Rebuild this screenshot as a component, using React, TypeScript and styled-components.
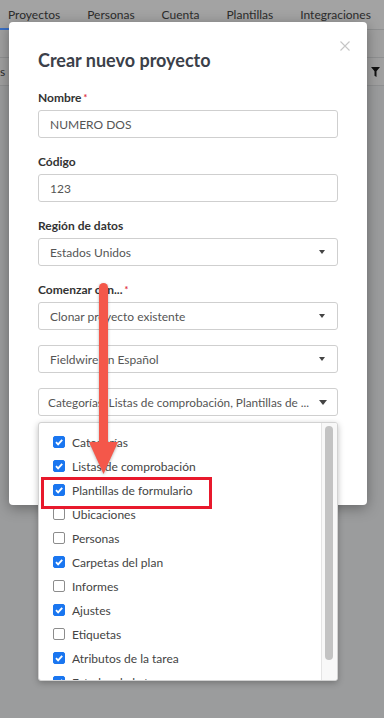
import React from "react";
import styled, { createGlobalStyle } from "styled-components";

const Global = createGlobalStyle`
  html, body { margin: 0; padding: 0; }
  body {
    background: #9b9c9d;
    font-family: Lato, "Noto Sans", sans-serif;
    overflow: hidden;
  }
  * { box-sizing: border-box; }
`;

const Page = styled.div`
  position: relative;
  width: 384px;
  height: 718px;
  overflow: hidden;
  background: #9b9c9d;
`;

const TopNav = styled.nav`
  display: flex;
  gap: 11px;
  height: 30px;
  background: #a3a3a3;
  border-bottom: 1px solid #8f9091;
`;

const Tab = styled.div<{ $active?: boolean }>`
  display: flex;
  align-items: center;
  padding: 0 8px;
  font-size: 12px;
  color: #2c2c2c;
  white-space: nowrap;
  border-bottom: 2px solid ${(p) => (p.$active ? "#3a6fc4" : "transparent")};
  margin-bottom: -1px;
`;

const BgRow = styled.div`
  display: flex;
  align-items: center;
  justify-content: space-between;
  height: 28px;
  background: #a0a0a0;
  border-bottom: 1px solid #8f9091;
  font-size: 12px;
  color: #2c2c2c;
  padding-right: 4px;
`;

const Modal = styled.div`
  position: absolute;
  left: 9px;
  top: 22px;
  width: 358px;
  height: 483px;
  background: #fff;
  border-radius: 4px;
  box-shadow: 0 3px 14px rgba(0, 0, 0, 0.35);
  padding: 26px 29px 0;
`;

const Close = styled.div`
  position: absolute;
  right: 17px;
  top: 19px;
  width: 10px;
  height: 10px;
  display: flex;
`;

const Title = styled.h2`
  margin: 0 0 18px;
  font-size: 18px;
  line-height: 24px;
  font-weight: 700;
  color: #3b4049;
`;

const Field = styled.div`
  display: flex;
  flex-direction: column;
  margin-bottom: 16px;
`;

const Label = styled.div`
  font-size: 12px;
  line-height: 16px;
  font-weight: 700;
  color: #333;
  margin-bottom: 4px;
`;

const Req = styled.span`
  color: #e0303a;
  font-size: 9px;
  vertical-align: top;
  margin-left: 2px;
`;

const Input = styled.div`
  height: 28px;
  border: 1px solid #cfcfcf;
  border-radius: 3px;
  padding: 0 11px;
  display: flex;
  align-items: center;
  font-size: 12px;
  color: #555;
`;

const SelectBox = styled.div<{ $tight?: boolean }>`
  height: 28px;
  border: 1px solid #cfcfcf;
  border-radius: 3px;
  padding: 0 ${(p) => (p.$tight ? "10px" : "12px")} 0 ${(p) => (p.$tight ? "9px" : "11px")};
  display: flex;
  align-items: center;
  justify-content: space-between;
  gap: ${(p) => (p.$tight ? "2px" : "10px")};
  font-size: ${(p) => (p.$tight ? "11.8px" : "12px")};
  color: #555;
`;

const SelectText = styled.span`
  flex: 1;
  min-width: 0;
  white-space: nowrap;
  overflow: hidden;
`;

const Stack = styled.div`
  display: flex;
  flex-direction: column;
  gap: 15px;
`;

const Caret = styled.span<{ $big?: boolean }>`
  width: 0;
  height: 0;
  border-left: ${(p) => (p.$big ? 4 : 3.5)}px solid transparent;
  border-right: ${(p) => (p.$big ? 4 : 3.5)}px solid transparent;
  border-top: ${(p) => (p.$big ? 5 : 4)}px solid #444;
  flex: none;
`;

const Dropdown = styled.div`
  position: absolute;
  left: 38px;
  top: 422px;
  width: 300px;
  height: 259px;
  background: #fff;
  border: 1px solid #d2d2d2;
  border-radius: 3px;
  box-shadow: 0 2px 6px rgba(0, 0, 0, 0.25);
  display: flex;
  overflow: hidden;
`;

const List = styled.div`
  flex: 1;
  padding-top: 7px;
  display: flex;
  flex-direction: column;
`;

const Item = styled.div`
  height: 24px;
  flex: none;
  display: flex;
  align-items: center;
  gap: 7px;
  padding-left: 14px;
  font-size: 12px;
  color: #444;
`;

const Check = styled.span<{ $on: boolean }>`
  width: 12px;
  height: 12px;
  flex: none;
  border-radius: 2px;
  background: ${(p) => (p.$on ? "#1a76f0" : "#fff")};
  border: 1px solid ${(p) => (p.$on ? "#1a76f0" : "#8c8c8c")};
  display: flex;
  align-items: center;
  justify-content: center;
`;

const Track = styled.div`
  width: 16px;
  flex: none;
  background: #f8f8f8;
  border-left: 1px solid #e4e4e4;
  padding: 3px 3px 0 3px;
`;

const Thumb = styled.div`
  width: 8px;
  height: 234px;
  border-radius: 4px;
  background: #c3c3c3;
`;

const Highlight = styled.div`
  position: absolute;
  left: 41px;
  top: 477px;
  width: 171px;
  height: 32px;
  border: 3px solid #e8192c;
`;

const ArrowSvg = styled.svg`
  position: absolute;
  left: 86px;
  top: 278px;
  overflow: visible;
  filter: drop-shadow(0 1px 1.5px rgba(0, 0, 0, 0.3));
`;

const items: [string, boolean][] = [
  ["Categorías", true],
  ["Listas de comprobación", true],
  ["Plantillas de formulario", true],
  ["Ubicaciones", false],
  ["Personas", false],
  ["Carpetas del plan", true],
  ["Informes", false],
  ["Ajustes", true],
  ["Etiquetas", false],
  ["Atributos de la tarea", true],
  ["Estados de la tarea", true],
];

export default function App() {
  return (
    <Page>
      <Global />
      <TopNav>
        <Tab $active>Proyectos</Tab>
        <Tab>Personas</Tab>
        <Tab>Cuenta</Tab>
        <Tab>Plantillas</Tab>
        <Tab>Integraciones</Tab>
      </TopNav>
      <BgRow />
      <BgRow>
        <span>s</span>
        <svg width="9" height="10" viewBox="0 0 9 10">
          <path d="M0 0 H9 L5.5 4.2 V10 L3.5 8.8 V4.2 Z" fill="#111" />
        </svg>
      </BgRow>

      <Modal>
        <Close>
          <svg width="10" height="10" viewBox="0 0 10 10">
            <path d="M0.5 0.5 L9.5 9.5 M9.5 0.5 L0.5 9.5" stroke="#c6c6c6" strokeWidth="1.1" />
          </svg>
        </Close>
        <Title>Crear nuevo proyecto</Title>
        <Field>
          <Label>
            Nombre<Req>*</Req>
          </Label>
          <Input>NUMERO DOS</Input>
        </Field>
        <Field>
          <Label>Código</Label>
          <Input>123</Input>
        </Field>
        <Field>
          <Label>Región de datos</Label>
          <SelectBox>
            <SelectText>Estados Unidos</SelectText>
            <Caret />
          </SelectBox>
        </Field>
        <Field>
          <Label>
            Comenzar con...<Req>*</Req>
          </Label>
          <Stack>
            <SelectBox>
              <SelectText>Clonar proyecto existente</SelectText>
              <Caret />
            </SelectBox>
            <SelectBox>
              <SelectText>Fieldwire en Español</SelectText>
              <Caret />
            </SelectBox>
            <SelectBox $tight>
              <SelectText>Categorías, Listas de comprobación, Plantillas de ...</SelectText>
              <Caret $big />
            </SelectBox>
          </Stack>
        </Field>
      </Modal>

      <Dropdown>
        <List>
          {items.map(([label, on]) => (
            <Item key={label}>
              <Check $on={on}>
                {on && (
                  <svg width="10" height="10" viewBox="0 0 10 10">
                    <path
                      d="M2 5.2 L4.1 7.3 L8.2 2.8"
                      stroke="#fff"
                      strokeWidth="1.9"
                      fill="none"
                    />
                  </svg>
                )}
              </Check>
              {label}
            </Item>
          ))}
        </List>
        <Track>
          <Thumb />
        </Track>
      </Dropdown>

      <Highlight />

      <ArrowSvg width="40" height="200" viewBox="0 0 40 200">
        <rect x="13" y="5" width="9" height="164" rx="4.5" fill="#f4574a" />
        <polygon points="3,164 32,164 17.5,196" fill="#f4574a" />
      </ArrowSvg>
    </Page>
  );
}
